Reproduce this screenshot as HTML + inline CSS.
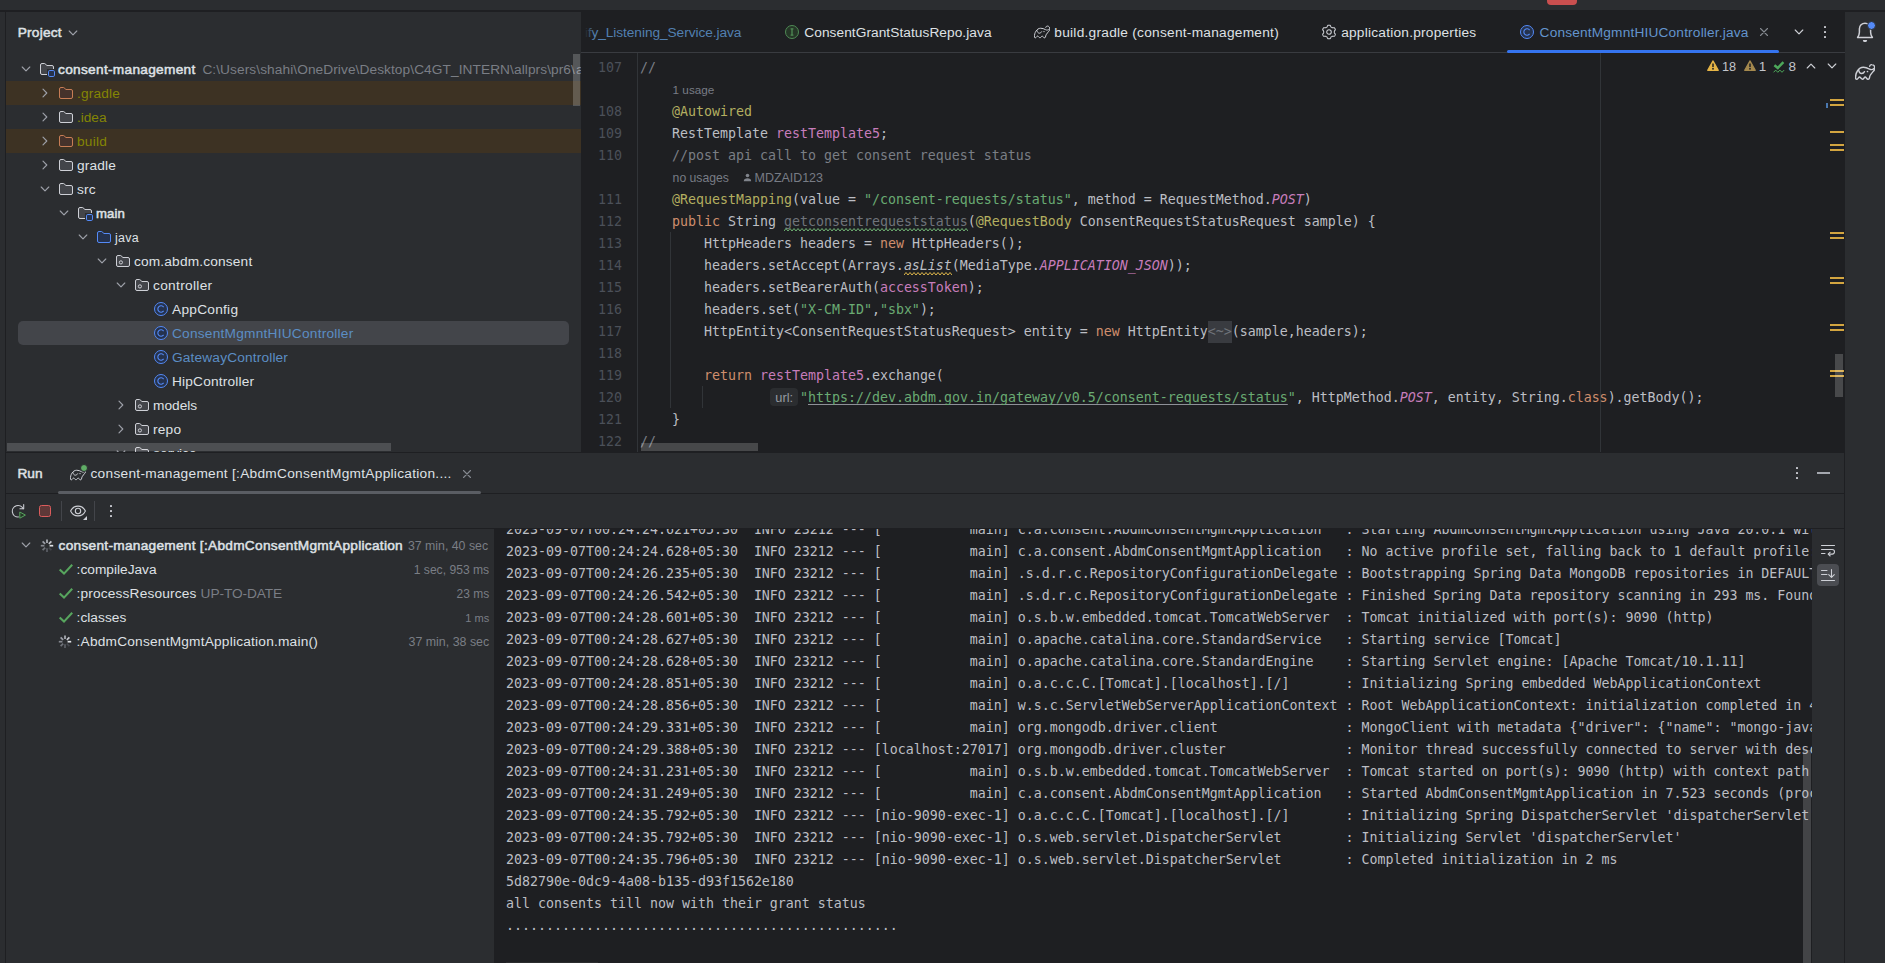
<!DOCTYPE html>
<html lang="en"><head><meta charset="utf-8"><title>consent-management – ConsentMgmntHIUController.java</title>
<style>
html,body{margin:0;padding:0;}
body{width:1885px;height:963px;overflow:hidden;background:#1e1f22;position:relative;font-family:"Liberation Sans", sans-serif;}
.b{position:absolute;display:block;}
.t{position:absolute;white-space:pre;font-family:"Liberation Sans", sans-serif;}
.m{position:absolute;white-space:pre;font-family:"DejaVu Sans Mono", "Liberation Mono", monospace;font-size:13.29px;line-height:22px;height:22px;color:#bcbec4;}
.m i{font-style:italic;}
.k{color:#cf8e6d} .s{color:#6aab73} .a{color:#b3ae60} .f{color:#c77dbb} .c{color:#7a7e85} .g{color:#6f737a}
.u{text-decoration:underline;text-underline-offset:2px;text-decoration-color:#8e9198;text-decoration-thickness:1px;text-decoration-skip-ink:none;}
.fold{background:#393b40;color:#6f737a;display:inline-block;height:22px;}
</style></head>
<body>
<div class="b" style="left:0px;top:0px;width:1885px;height:10px;background:#2b2d30;"></div>
<div class="b" style="left:1547px;top:0px;width:30px;height:5px;background:#c94f4f;border-radius:0 0 4px 4px;"></div>
<div class="b" style="left:0px;top:12px;width:5px;height:951px;background:#2b2d30;"></div>
<div class="b" style="left:6px;top:12px;width:575px;height:440px;background:#2b2d30;"></div>
<div class="b" style="left:1845px;top:12px;width:40px;height:951px;background:#2b2d30;"></div>
<div class="b" style="left:6px;top:453px;width:1839px;height:510px;background:#2b2d30;"></div>
<div class="b" style="left:494px;top:529px;width:1318px;height:434px;background:#1e1f22;"></div>
<span class="t" style="left:17.75px;top:21.0px;line-height:24px;font-size:13.7px;color:#dfe1e5;-webkit-text-stroke:0.5px;letter-spacing:0.2px;">Project</span>
<svg class="b" style="left:65px;top:25px;" width="16" height="16" viewBox="0 0 16 16" fill="none"><path d="M4.2 6L8 9.8L11.8 6" stroke="#9da0a8" stroke-width="1.15" fill="none" stroke-linecap="round" stroke-linejoin="round"/></svg>
<div class="b" style="left:6px;top:81px;width:575px;height:24px;background:#3d3223;"></div>
<div class="b" style="left:6px;top:129px;width:575px;height:24px;background:#3d3223;"></div>
<div class="b" style="left:18px;top:321px;width:551px;height:24px;background:#43454a;border-radius:5px;"></div>
<svg class="b" style="left:18px;top:61px;" width="16" height="16" viewBox="0 0 16 16" fill="none"><path d="M4.2 6L8 9.8L11.8 6" stroke="#9da0a8" stroke-width="1.15" fill="none" stroke-linecap="round" stroke-linejoin="round"/></svg>
<svg class="b" style="left:39px;top:61px;" width="16" height="16" viewBox="0 0 16 16" fill="none"><path d="M1.5 4A1.5 1.5 0 0 1 3 2.5H5.6C5.9 2.5 6.2 2.64 6.4 2.87L7.7 4.5H13A1.5 1.5 0 0 1 14.5 6V8H8V13.5H3A1.5 1.5 0 0 1 1.5 12Z" fill="#43454a"/><path d="M8 13.5H3A1.5 1.5 0 0 1 1.5 12V4A1.5 1.5 0 0 1 3 2.5H5.6C5.9 2.5 6.2 2.64 6.4 2.87L7.7 4.5H13A1.5 1.5 0 0 1 14.5 6V8" stroke="#ced0d6" fill="none"/><rect x="9.5" y="9.5" width="6" height="6" rx="1.3" fill="#25324d" stroke="#548af7"/></svg>
<span class="t" style="left:58px;top:58.0px;line-height:24px;font-size:13.7px;color:#dfe1e5;-webkit-text-stroke:0.5px;letter-spacing:0.29px;">consent-management</span>
<svg class="b" style="left:36.7px;top:85px;" width="16" height="16" viewBox="0 0 16 16" fill="none"><path d="M6 4.2L9.8 8L6 11.8" stroke="#9da0a8" stroke-width="1.15" fill="none" stroke-linecap="round" stroke-linejoin="round"/></svg>
<svg class="b" style="left:58px;top:85px;" width="16" height="16" viewBox="0 0 16 16" fill="none"><path d="M1.5 4A1.5 1.5 0 0 1 3 2.5H5.6C5.9 2.5 6.2 2.64 6.4 2.87L7.7 4.5H13A1.5 1.5 0 0 1 14.5 6V12A1.5 1.5 0 0 1 13 13.5H3A1.5 1.5 0 0 1 1.5 12Z" fill="#45322b" stroke="#c77d55"/></svg>
<span class="t" style="left:77px;top:82.0px;line-height:24px;font-size:13.7px;color:#848504;letter-spacing:0.18px;">.gradle</span>
<svg class="b" style="left:36.7px;top:109px;" width="16" height="16" viewBox="0 0 16 16" fill="none"><path d="M6 4.2L9.8 8L6 11.8" stroke="#9da0a8" stroke-width="1.15" fill="none" stroke-linecap="round" stroke-linejoin="round"/></svg>
<svg class="b" style="left:58px;top:109px;" width="16" height="16" viewBox="0 0 16 16" fill="none"><path d="M1.5 4A1.5 1.5 0 0 1 3 2.5H5.6C5.9 2.5 6.2 2.64 6.4 2.87L7.7 4.5H13A1.5 1.5 0 0 1 14.5 6V12A1.5 1.5 0 0 1 13 13.5H3A1.5 1.5 0 0 1 1.5 12Z" fill="#43454a" stroke="#ced0d6"/></svg>
<span class="t" style="left:77px;top:106.0px;line-height:24px;font-size:13.7px;color:#848504;letter-spacing:-0.04px;">.idea</span>
<svg class="b" style="left:36.7px;top:133px;" width="16" height="16" viewBox="0 0 16 16" fill="none"><path d="M6 4.2L9.8 8L6 11.8" stroke="#9da0a8" stroke-width="1.15" fill="none" stroke-linecap="round" stroke-linejoin="round"/></svg>
<svg class="b" style="left:58px;top:133px;" width="16" height="16" viewBox="0 0 16 16" fill="none"><path d="M1.5 4A1.5 1.5 0 0 1 3 2.5H5.6C5.9 2.5 6.2 2.64 6.4 2.87L7.7 4.5H13A1.5 1.5 0 0 1 14.5 6V12A1.5 1.5 0 0 1 13 13.5H3A1.5 1.5 0 0 1 1.5 12Z" fill="#45322b" stroke="#c77d55"/></svg>
<span class="t" style="left:77px;top:130.0px;line-height:24px;font-size:13.7px;color:#848504;letter-spacing:0.25px;">build</span>
<svg class="b" style="left:36.7px;top:157px;" width="16" height="16" viewBox="0 0 16 16" fill="none"><path d="M6 4.2L9.8 8L6 11.8" stroke="#9da0a8" stroke-width="1.15" fill="none" stroke-linecap="round" stroke-linejoin="round"/></svg>
<svg class="b" style="left:58px;top:157px;" width="16" height="16" viewBox="0 0 16 16" fill="none"><path d="M1.5 4A1.5 1.5 0 0 1 3 2.5H5.6C5.9 2.5 6.2 2.64 6.4 2.87L7.7 4.5H13A1.5 1.5 0 0 1 14.5 6V12A1.5 1.5 0 0 1 13 13.5H3A1.5 1.5 0 0 1 1.5 12Z" fill="#43454a" stroke="#ced0d6"/></svg>
<span class="t" style="left:77px;top:154.0px;line-height:24px;font-size:13.7px;color:#dfe1e5;letter-spacing:0.15px;">gradle</span>
<svg class="b" style="left:37px;top:181px;" width="16" height="16" viewBox="0 0 16 16" fill="none"><path d="M4.2 6L8 9.8L11.8 6" stroke="#9da0a8" stroke-width="1.15" fill="none" stroke-linecap="round" stroke-linejoin="round"/></svg>
<svg class="b" style="left:58px;top:181px;" width="16" height="16" viewBox="0 0 16 16" fill="none"><path d="M1.5 4A1.5 1.5 0 0 1 3 2.5H5.6C5.9 2.5 6.2 2.64 6.4 2.87L7.7 4.5H13A1.5 1.5 0 0 1 14.5 6V12A1.5 1.5 0 0 1 13 13.5H3A1.5 1.5 0 0 1 1.5 12Z" fill="#43454a" stroke="#ced0d6"/></svg>
<span class="t" style="left:77px;top:178.0px;line-height:24px;font-size:13.7px;color:#dfe1e5;letter-spacing:0.2px;">src</span>
<svg class="b" style="left:56px;top:205px;" width="16" height="16" viewBox="0 0 16 16" fill="none"><path d="M4.2 6L8 9.8L11.8 6" stroke="#9da0a8" stroke-width="1.15" fill="none" stroke-linecap="round" stroke-linejoin="round"/></svg>
<svg class="b" style="left:77px;top:205px;" width="16" height="16" viewBox="0 0 16 16" fill="none"><path d="M1.5 4A1.5 1.5 0 0 1 3 2.5H5.6C5.9 2.5 6.2 2.64 6.4 2.87L7.7 4.5H13A1.5 1.5 0 0 1 14.5 6V8H8V13.5H3A1.5 1.5 0 0 1 1.5 12Z" fill="#43454a"/><path d="M8 13.5H3A1.5 1.5 0 0 1 1.5 12V4A1.5 1.5 0 0 1 3 2.5H5.6C5.9 2.5 6.2 2.64 6.4 2.87L7.7 4.5H13A1.5 1.5 0 0 1 14.5 6V8" stroke="#ced0d6" fill="none"/><rect x="9.5" y="9.5" width="6" height="6" rx="1.3" fill="#25324d" stroke="#548af7"/></svg>
<span class="t" style="left:96px;top:202.0px;line-height:24px;font-size:13.16px;color:#dfe1e5;-webkit-text-stroke:0.5px;letter-spacing:0.08px;">main</span>
<svg class="b" style="left:75px;top:229px;" width="16" height="16" viewBox="0 0 16 16" fill="none"><path d="M4.2 6L8 9.8L11.8 6" stroke="#9da0a8" stroke-width="1.15" fill="none" stroke-linecap="round" stroke-linejoin="round"/></svg>
<svg class="b" style="left:96px;top:229px;" width="16" height="16" viewBox="0 0 16 16" fill="none"><path d="M1.5 4A1.5 1.5 0 0 1 3 2.5H5.6C5.9 2.5 6.2 2.64 6.4 2.87L7.7 4.5H13A1.5 1.5 0 0 1 14.5 6V12A1.5 1.5 0 0 1 13 13.5H3A1.5 1.5 0 0 1 1.5 12Z" fill="#25324d" stroke="#548af7"/></svg>
<span class="t" style="left:115px;top:226.0px;line-height:24px;font-size:12.41px;color:#dfe1e5;letter-spacing:0.3px;">java</span>
<svg class="b" style="left:94px;top:253px;" width="16" height="16" viewBox="0 0 16 16" fill="none"><path d="M4.2 6L8 9.8L11.8 6" stroke="#9da0a8" stroke-width="1.15" fill="none" stroke-linecap="round" stroke-linejoin="round"/></svg>
<svg class="b" style="left:115px;top:253px;" width="16" height="16" viewBox="0 0 16 16" fill="none"><path d="M1.5 4A1.5 1.5 0 0 1 3 2.5H5.6C5.9 2.5 6.2 2.64 6.4 2.87L7.7 4.5H13A1.5 1.5 0 0 1 14.5 6V12A1.5 1.5 0 0 1 13 13.5H3A1.5 1.5 0 0 1 1.5 12Z" fill="#43454a" stroke="#ced0d6"/><circle cx="5.9" cy="9.4" r="1.6" stroke="#ced0d6" stroke-width="1" fill="none"/></svg>
<span class="t" style="left:134px;top:250.0px;line-height:24px;font-size:13.7px;color:#dfe1e5;letter-spacing:0.17px;">com.abdm.consent</span>
<svg class="b" style="left:113px;top:277px;" width="16" height="16" viewBox="0 0 16 16" fill="none"><path d="M4.2 6L8 9.8L11.8 6" stroke="#9da0a8" stroke-width="1.15" fill="none" stroke-linecap="round" stroke-linejoin="round"/></svg>
<svg class="b" style="left:134px;top:277px;" width="16" height="16" viewBox="0 0 16 16" fill="none"><path d="M1.5 4A1.5 1.5 0 0 1 3 2.5H5.6C5.9 2.5 6.2 2.64 6.4 2.87L7.7 4.5H13A1.5 1.5 0 0 1 14.5 6V12A1.5 1.5 0 0 1 13 13.5H3A1.5 1.5 0 0 1 1.5 12Z" fill="#43454a" stroke="#ced0d6"/><circle cx="5.9" cy="9.4" r="1.6" stroke="#ced0d6" stroke-width="1" fill="none"/></svg>
<span class="t" style="left:153px;top:274.0px;line-height:24px;font-size:13.7px;color:#dfe1e5;letter-spacing:0.32px;">controller</span>
<svg class="b" style="left:153px;top:301px;" width="16" height="16" viewBox="0 0 16 16" fill="none"><circle cx="8" cy="8" r="6.5" fill="#25324d" stroke="#548af7"/><path d="M10.6 6.1A3.2 3.2 0 1 0 10.6 9.9" stroke="#548af7" stroke-width="1.1" fill="none"/></svg>
<span class="t" style="left:172px;top:298.0px;line-height:24px;font-size:13.7px;color:#dfe1e5;letter-spacing:0.26px;">AppConfig</span>
<svg class="b" style="left:153px;top:325px;" width="16" height="16" viewBox="0 0 16 16" fill="none"><circle cx="8" cy="8" r="6.5" fill="#25324d" stroke="#548af7"/><path d="M10.6 6.1A3.2 3.2 0 1 0 10.6 9.9" stroke="#548af7" stroke-width="1.1" fill="none"/></svg>
<span class="t" style="left:172px;top:322.0px;line-height:24px;font-size:13.7px;color:#5b8dc4;letter-spacing:0.23px;">ConsentMgmntHIUController</span>
<svg class="b" style="left:153px;top:349px;" width="16" height="16" viewBox="0 0 16 16" fill="none"><circle cx="8" cy="8" r="6.5" fill="#25324d" stroke="#548af7"/><path d="M10.6 6.1A3.2 3.2 0 1 0 10.6 9.9" stroke="#548af7" stroke-width="1.1" fill="none"/></svg>
<span class="t" style="left:172px;top:346.0px;line-height:24px;font-size:13.7px;color:#5b8dc4;letter-spacing:0.16px;">GatewayController</span>
<svg class="b" style="left:153px;top:373px;" width="16" height="16" viewBox="0 0 16 16" fill="none"><circle cx="8" cy="8" r="6.5" fill="#25324d" stroke="#548af7"/><path d="M10.6 6.1A3.2 3.2 0 1 0 10.6 9.9" stroke="#548af7" stroke-width="1.1" fill="none"/></svg>
<span class="t" style="left:172px;top:370.0px;line-height:24px;font-size:13.7px;color:#dfe1e5;letter-spacing:0.19px;">HipController</span>
<svg class="b" style="left:112.7px;top:397px;" width="16" height="16" viewBox="0 0 16 16" fill="none"><path d="M6 4.2L9.8 8L6 11.8" stroke="#9da0a8" stroke-width="1.15" fill="none" stroke-linecap="round" stroke-linejoin="round"/></svg>
<svg class="b" style="left:134px;top:397px;" width="16" height="16" viewBox="0 0 16 16" fill="none"><path d="M1.5 4A1.5 1.5 0 0 1 3 2.5H5.6C5.9 2.5 6.2 2.64 6.4 2.87L7.7 4.5H13A1.5 1.5 0 0 1 14.5 6V12A1.5 1.5 0 0 1 13 13.5H3A1.5 1.5 0 0 1 1.5 12Z" fill="#43454a" stroke="#ced0d6"/><circle cx="5.9" cy="9.4" r="1.6" stroke="#ced0d6" stroke-width="1" fill="none"/></svg>
<span class="t" style="left:153px;top:394.0px;line-height:24px;font-size:13.7px;color:#dfe1e5;letter-spacing:0px;">models</span>
<svg class="b" style="left:112.7px;top:421px;" width="16" height="16" viewBox="0 0 16 16" fill="none"><path d="M6 4.2L9.8 8L6 11.8" stroke="#9da0a8" stroke-width="1.15" fill="none" stroke-linecap="round" stroke-linejoin="round"/></svg>
<svg class="b" style="left:134px;top:421px;" width="16" height="16" viewBox="0 0 16 16" fill="none"><path d="M1.5 4A1.5 1.5 0 0 1 3 2.5H5.6C5.9 2.5 6.2 2.64 6.4 2.87L7.7 4.5H13A1.5 1.5 0 0 1 14.5 6V12A1.5 1.5 0 0 1 13 13.5H3A1.5 1.5 0 0 1 1.5 12Z" fill="#43454a" stroke="#ced0d6"/><circle cx="5.9" cy="9.4" r="1.6" stroke="#ced0d6" stroke-width="1" fill="none"/></svg>
<span class="t" style="left:153px;top:418.0px;line-height:24px;font-size:13.7px;color:#dfe1e5;letter-spacing:0.21px;">repo</span>
<div class="b" style="left:200px;top:57px;width:381px;height:24px;overflow:hidden">
<span class="t" style="left:2.4px;top:1.0px;line-height:24px;font-size:13.7px;color:#7a7e85;letter-spacing:0.08px;">C:\Users\shahi\OneDrive\Desktop\C4GT_INTERN\allprs\pr6\</span>
<span class="t" style="left:375.9px;top:1.0px;line-height:24px;font-size:13.7px;color:#7a7e85;">allprs</span>
</div>
<div class="b" style="left:6px;top:441px;width:575px;height:11px;overflow:hidden">
<svg class="b" style="left:107px;top:4px;" width="16" height="16" viewBox="0 0 16 16" fill="none"><path d="M4.2 6L8 9.8L11.8 6" stroke="#9da0a8" stroke-width="1.15" fill="none" stroke-linecap="round" stroke-linejoin="round"/></svg>
<svg class="b" style="left:128px;top:4px;" width="16" height="16" viewBox="0 0 16 16" fill="none"><path d="M1.5 4A1.5 1.5 0 0 1 3 2.5H5.6C5.9 2.5 6.2 2.64 6.4 2.87L7.7 4.5H13A1.5 1.5 0 0 1 14.5 6V12A1.5 1.5 0 0 1 13 13.5H3A1.5 1.5 0 0 1 1.5 12Z" fill="#43454a" stroke="#ced0d6"/><circle cx="5.9" cy="9.4" r="1.6" stroke="#ced0d6" stroke-width="1" fill="none"/></svg>
<span class="t" style="left:147.2px;top:1.0px;line-height:24px;font-size:13.7px;color:#dfe1e5;">service</span>
</div>
<div class="b" style="left:573px;top:54px;width:7px;height:52px;background:rgba(255,255,255,0.2);"></div>
<div class="b" style="left:7px;top:443px;width:384px;height:8px;background:rgba(255,255,255,0.165);"></div>
<div class="b" style="left:581px;top:52px;width:1264px;height:1px;background:#393b40;"></div>
<div class="b" style="left:584px;top:12px;width:200px;height:40px;overflow:hidden">
<span class="t" style="left:0.7px;top:9.0px;line-height:24px;font-size:13.7px;color:#527fb0;letter-spacing:-0.06px;">ify_Listening_Service.java</span>
</div>
<div class="b" style="left:584px;top:14px;width:10px;height:36px;background:linear-gradient(to right,#1e1f22 10%,rgba(30,31,34,0));"></div>
<svg class="b" style="left:784px;top:24px;" width="16" height="16" viewBox="0 0 16 16" fill="none"><circle cx="8" cy="8" r="6.5" fill="#253627" stroke="#4f8a55"/><path d="M6.6 4.8H9.4M8 4.8V11.2M6.6 11.2H9.4" stroke="#4f8a55" stroke-width="1.3" fill="none"/></svg>
<span class="t" style="left:804.3px;top:21.0px;line-height:24px;font-size:13.7px;color:#dfe1e5;letter-spacing:0.06px;">ConsentGrantStatusRepo.java</span>
<svg class="b" style="left:1033.5px;top:24.4px;" width="16" height="16" viewBox="0 0 20 20" fill="none"><path d="M14.7 4.2C15 3 16 2.5 17 2.6C18.6 2.7 19.8 4.2 19.8 6.2C19.8 7.6 19.3 8.2 18.6 9C17.6 10.2 16 12 15.1 13.5C14.6 14.4 14.6 15.4 14.4 16.2C14.2 17 13.6 17.4 12.9 17.3C11.8 17.2 11 15 10.2 15C9.4 15 8.6 17.3 7.5 17.3C6.4 17.3 5.4 15 4.5 15C3.6 15 2.8 17.3 1.7 17.3C1 17.3 0.6 16.9 0.6 16.2C0.4 13.5 1.2 10.8 2.4 9C3.8 6.8 5.8 5.3 8.4 5.3C10.6 5.3 12.4 6 14.5 7.1C16 7.9 17.6 7.8 18.9 6.6" stroke="#ced0d6" stroke-width="1.25" fill="none" stroke-linecap="round" stroke-linejoin="round"/><path d="M3.7 8.3C4 10 5 11.4 6.6 11.5C8 11.6 9 10.6 9.5 9.7" stroke="#ced0d6" stroke-width="1.25" fill="none" stroke-linecap="round"/><circle cx="12.5" cy="9.5" r="0.85" fill="#ced0d6"/></svg>
<span class="t" style="left:1054.3px;top:21.0px;line-height:24px;font-size:13.7px;color:#dfe1e5;letter-spacing:0.26px;">build.gradle (consent-management)</span>
<svg class="b" style="left:1321px;top:24px;" width="16" height="16" viewBox="0 0 16 16" fill="none"><path d="M13.35 8.00 L13.34 8.35 L13.30 8.70 L13.53 9.10 L13.89 9.58 L14.21 10.11 L14.33 10.62 L14.14 11.03 L13.93 11.42 L13.70 11.81 L13.43 12.17 L12.93 12.32 L12.31 12.31 L11.72 12.24 L11.26 12.24 L10.97 12.45 L10.68 12.63 L10.37 12.80 L10.05 12.94 L9.81 13.34 L9.58 13.89 L9.28 14.43 L8.89 14.79 L8.45 14.84 L8.00 14.85 L7.55 14.84 L7.11 14.79 L6.72 14.43 L6.42 13.89 L6.19 13.34 L5.95 12.94 L5.63 12.80 L5.33 12.63 L5.03 12.45 L4.74 12.24 L4.28 12.24 L3.69 12.31 L3.07 12.32 L2.57 12.17 L2.30 11.81 L2.07 11.42 L1.86 11.03 L1.67 10.62 L1.79 10.11 L2.11 9.58 L2.47 9.10 L2.70 8.70 L2.66 8.35 L2.65 8.00 L2.66 7.65 L2.70 7.30 L2.47 6.90 L2.11 6.42 L1.79 5.89 L1.67 5.38 L1.86 4.97 L2.07 4.58 L2.30 4.19 L2.57 3.83 L3.07 3.68 L3.69 3.69 L4.28 3.76 L4.74 3.76 L5.03 3.55 L5.32 3.37 L5.63 3.20 L5.95 3.06 L6.19 2.66 L6.42 2.11 L6.72 1.57 L7.11 1.21 L7.55 1.16 L8.00 1.15 L8.45 1.16 L8.89 1.21 L9.28 1.57 L9.58 2.11 L9.81 2.66 L10.05 3.06 L10.37 3.20 L10.68 3.37 L10.97 3.55 L11.26 3.76 L11.72 3.76 L12.31 3.69 L12.93 3.68 L13.43 3.83 L13.70 4.19 L13.93 4.57 L14.14 4.97 L14.33 5.38 L14.21 5.89 L13.89 6.42 L13.53 6.90 L13.30 7.30 L13.34 7.65Z" stroke="#ced0d6" stroke-width="1.05" stroke-linejoin="round" fill="none"/><circle cx="8" cy="8" r="2.3" stroke="#ced0d6" stroke-width="1.05" fill="none"/></svg>
<span class="t" style="left:1341.2px;top:21.0px;line-height:24px;font-size:13.7px;color:#dfe1e5;letter-spacing:0.23px;">application.properties</span>
<svg class="b" style="left:1519px;top:24px;" width="16" height="16" viewBox="0 0 16 16" fill="none"><circle cx="8" cy="8" r="6.5" fill="#25324d" stroke="#548af7"/><path d="M10.6 6.1A3.2 3.2 0 1 0 10.6 9.9" stroke="#548af7" stroke-width="1.1" fill="none"/></svg>
<span class="t" style="left:1539.6px;top:21.0px;line-height:24px;font-size:13.7px;color:#6394cd;letter-spacing:0.17px;">ConsentMgmntHIUController.java</span>
<svg class="b" style="left:1756px;top:24px;" width="16" height="16" viewBox="0 0 16 16" fill="none"><path d="M4.5 4.5L11.5 11.5M11.5 4.5L4.5 11.5" stroke="#868a91" stroke-width="1.1" stroke-linecap="round"/></svg>
<div class="b" style="left:1507px;top:50px;width:272px;height:3px;background:#3574f0;border-radius:1.5px;"></div>
<svg class="b" style="left:1791px;top:24px;" width="16" height="16" viewBox="0 0 16 16" fill="none"><path d="M4.2 6L8 9.8L11.8 6" stroke="#ced0d6" stroke-width="1.15" fill="none" stroke-linecap="round" stroke-linejoin="round"/></svg>
<svg class="b" style="left:1817px;top:24px;" width="16" height="16" viewBox="0 0 16 16" fill="none"><rect x="7" y="2" width="2" height="2" rx="0.4" fill="#ced0d6"/><rect x="7" y="7" width="2" height="2" rx="0.4" fill="#ced0d6"/><rect x="7" y="12" width="2" height="2" rx="0.4" fill="#ced0d6"/></svg>
<div class="b" style="left:637px;top:53px;width:1px;height:399px;background:#313438;"></div>
<div class="b" style="left:1600px;top:53px;width:1px;height:399px;background:#313438;"></div>
<div class="b" style="left:670px;top:232px;width:1px;height:176px;background:#313438;"></div>
<div class="b" style="left:702px;top:386px;width:1px;height:22px;background:#313438;"></div>
<div class="m" style="left:590px;width:32px;top:57px;text-align:right;color:#4b5059">107</div>
<div class="m" style="left:640px;top:57px"><span class="c">//</span></div>
<div class="m" style="left:590px;width:32px;top:101px;text-align:right;color:#4b5059">108</div>
<div class="m" style="left:640px;top:101px">    <span class="a">@Autowired</span></div>
<div class="m" style="left:590px;width:32px;top:123px;text-align:right;color:#4b5059">109</div>
<div class="m" style="left:640px;top:123px">    RestTemplate <span class="f">restTemplate5</span>;</div>
<div class="m" style="left:590px;width:32px;top:145px;text-align:right;color:#4b5059">110</div>
<div class="m" style="left:640px;top:145px">    <span class="c">//post api call to get consent request status</span></div>
<div class="m" style="left:590px;width:32px;top:189px;text-align:right;color:#4b5059">111</div>
<div class="m" style="left:640px;top:189px">    <span class="a">@RequestMapping</span>(value = <span class="s">"/consent-requests/status"</span>, method = RequestMethod.<i class="f">POST</i>)</div>
<div class="m" style="left:590px;width:32px;top:211px;text-align:right;color:#4b5059">112</div>
<div class="m" style="left:640px;top:211px">    <span class="k">public</span> String <span class="g">getconsentrequeststatus</span>(<span class="a">@RequestBody</span> ConsentRequestStatusRequest sample) {</div>
<div class="m" style="left:590px;width:32px;top:233px;text-align:right;color:#4b5059">113</div>
<div class="m" style="left:640px;top:233px">        HttpHeaders headers = <span class="k">new</span> HttpHeaders();</div>
<div class="m" style="left:590px;width:32px;top:255px;text-align:right;color:#4b5059">114</div>
<div class="m" style="left:640px;top:255px">        headers.setAccept(Arrays.<i>asList</i>(MediaType.<i class="f">APPLICATION_JSON</i>));</div>
<div class="m" style="left:590px;width:32px;top:277px;text-align:right;color:#4b5059">115</div>
<div class="m" style="left:640px;top:277px">        headers.setBearerAuth(<span class="f">accessToken</span>);</div>
<div class="m" style="left:590px;width:32px;top:299px;text-align:right;color:#4b5059">116</div>
<div class="m" style="left:640px;top:299px">        headers.set(<span class="s">"X-CM-ID"</span>,<span class="s">"sbx"</span>);</div>
<div class="m" style="left:590px;width:32px;top:321px;text-align:right;color:#4b5059">117</div>
<div class="m" style="left:640px;top:321px">        HttpEntity&lt;ConsentRequestStatusRequest&gt; entity = <span class="k">new</span> HttpEntity<span class="fold">&lt;~&gt;</span>(sample,headers);</div>
<div class="m" style="left:590px;width:32px;top:343px;text-align:right;color:#4b5059">118</div>
<div class="m" style="left:590px;width:32px;top:365px;text-align:right;color:#4b5059">119</div>
<div class="m" style="left:640px;top:365px">        <span class="k">return</span> <span class="f">restTemplate5</span>.exchange(</div>
<div class="m" style="left:590px;width:32px;top:387px;text-align:right;color:#4b5059">120</div>
<div class="m" style="left:800px;top:387px"><span class="s">"<span class="u">https://dev.abdm.gov.in/gateway/v0.5/consent-requests/status</span>"</span>, HttpMethod.<i class="f">POST</i>, entity, String.<span class="k">class</span>).getBody();</div>
<div class="m" style="left:590px;width:32px;top:409px;text-align:right;color:#4b5059">121</div>
<div class="m" style="left:640px;top:409px">    }</div>
<div class="m" style="left:590px;width:32px;top:431px;text-align:right;color:#4b5059">122</div>
<div class="m" style="left:640px;top:431px"><span class="c">//</span></div>
<div class="b" style="left:770px;top:388px;width:28px;height:18px;background:#2b2d30;border-radius:4px;"></div>
<span class="t" style="left:775.3px;top:389.0px;line-height:18px;font-size:12.8px;color:#959aa2;letter-spacing:0.03px;">url:</span>
<span class="t" style="left:672.6px;top:79.0px;line-height:22px;font-size:11.73px;color:#787c85;letter-spacing:0px;">1 usage</span>
<span class="t" style="left:672.6px;top:167.0px;line-height:22px;font-size:12.23px;color:#787c85;letter-spacing:0px;">no usages</span>
<svg class="b" style="left:741.5px;top:172px;" width="11" height="11" viewBox="0 0 16 16" fill="none"><circle cx="8" cy="5.2" r="2.6" fill="#80848c"/><path d="M2.6 13.4C2.6 10.6 5 9.2 8 9.2C11 9.2 13.4 10.6 13.4 13.4Z" fill="#80848c"/></svg>
<span class="t" style="left:754.6px;top:167.0px;line-height:22px;font-size:12.5px;color:#787c85;letter-spacing:-0.05px;">MDZAID123</span>
<svg class="b" style="left:784px;top:227.8px;" width="184" height="4" viewBox="0 0 184 4" fill="none"><path d="M0 3.0L2 0.5L4 3.0L6 0.5L8 3.0L10 0.5L12 3.0L14 0.5L16 3.0L18 0.5L20 3.0L22 0.5L24 3.0L26 0.5L28 3.0L30 0.5L32 3.0L34 0.5L36 3.0L38 0.5L40 3.0L42 0.5L44 3.0L46 0.5L48 3.0L50 0.5L52 3.0L54 0.5L56 3.0L58 0.5L60 3.0L62 0.5L64 3.0L66 0.5L68 3.0L70 0.5L72 3.0L74 0.5L76 3.0L78 0.5L80 3.0L82 0.5L84 3.0L86 0.5L88 3.0L90 0.5L92 3.0L94 0.5L96 3.0L98 0.5L100 3.0L102 0.5L104 3.0L106 0.5L108 3.0L110 0.5L112 3.0L114 0.5L116 3.0L118 0.5L120 3.0L122 0.5L124 3.0L126 0.5L128 3.0L130 0.5L132 3.0L134 0.5L136 3.0L138 0.5L140 3.0L142 0.5L144 3.0L146 0.5L148 3.0L150 0.5L152 3.0L154 0.5L156 3.0L158 0.5L160 3.0L162 0.5L164 3.0L166 0.5L168 3.0L170 0.5L172 3.0L174 0.5L176 3.0L178 0.5L180 3.0L182 0.5L184 3.0" stroke="#6fb374" stroke-width="1" fill="none"/></svg>
<svg class="b" style="left:904px;top:271.8px;" width="48" height="4" viewBox="0 0 48 4" fill="none"><path d="M0 3.0L2 0.5L4 3.0L6 0.5L8 3.0L10 0.5L12 3.0L14 0.5L16 3.0L18 0.5L20 3.0L22 0.5L24 3.0L26 0.5L28 3.0L30 0.5L32 3.0L34 0.5L36 3.0L38 0.5L40 3.0L42 0.5L44 3.0L46 0.5L48 3.0" stroke="#dcb64c" stroke-width="1" fill="none"/></svg>
<svg class="b" style="left:1705px;top:58px;" width="16" height="16" viewBox="0 0 16 16" fill="none"><path d="M8 2.9L13.3 12.3H2.7Z" fill="#e5b446" stroke="#e5b446" stroke-width="1.2" stroke-linejoin="round"/><path d="M8 5.4V9" stroke="#1e1f22" stroke-width="1.5"/><rect x="7.2" y="9.9" width="1.6" height="1.7" fill="#1e1f22"/></svg>
<span class="t" style="left:1721.96px;top:55.0px;line-height:24px;font-size:12.69px;color:#c3c5cb;letter-spacing:-0px;">18</span>
<svg class="b" style="left:1742px;top:58px;" width="16" height="16" viewBox="0 0 16 16" fill="none"><path d="M8 2.9L13.3 12.3H2.7Z" fill="#a5894e" stroke="#a5894e" stroke-width="1.2" stroke-linejoin="round"/><path d="M8 5.4V9" stroke="#1e1f22" stroke-width="1.5"/><rect x="7.2" y="9.9" width="1.6" height="1.7" fill="#1e1f22"/></svg>
<span class="t" style="left:1758.8px;top:55.0px;line-height:24px;font-size:13.5px;color:#c3c5cb;">1</span>
<svg class="b" style="left:1771px;top:58px;" width="16" height="16" viewBox="0 0 16 16" fill="none"><path d="M3.4 7.3L6.8 10L12.4 4.1" stroke="#4da85a" stroke-width="2.5" fill="none" stroke-linejoin="miter"/><path d="M2.6 14.3L4.7 12.1L6.8 14.3L8.9 12.1L11 14.3L13.1 12.1" stroke="#4da85a" stroke-width="1" fill="none"/></svg>
<span class="t" style="left:1788.6px;top:55.0px;line-height:24px;font-size:13.5px;color:#c3c5cb;">8</span>
<svg class="b" style="left:1803px;top:58px;" width="16" height="16" viewBox="0 0 16 16" fill="none"><path d="M4.2 10L8 6.2L11.8 10" stroke="#ced0d6" stroke-width="1.15" fill="none" stroke-linecap="round" stroke-linejoin="round"/></svg>
<svg class="b" style="left:1824px;top:58px;" width="16" height="16" viewBox="0 0 16 16" fill="none"><path d="M4.2 6L8 9.8L11.8 6" stroke="#ced0d6" stroke-width="1.15" fill="none" stroke-linecap="round" stroke-linejoin="round"/></svg>
<div class="b" style="left:1830px;top:99px;width:14px;height:2px;background:#d3a540;"></div>
<div class="b" style="left:1830px;top:104px;width:14px;height:2px;background:#d3a540;"></div>
<div class="b" style="left:1830px;top:131px;width:14px;height:2px;background:#d3a540;"></div>
<div class="b" style="left:1830px;top:144px;width:14px;height:2px;background:#d3a540;"></div>
<div class="b" style="left:1830px;top:149px;width:14px;height:2px;background:#d3a540;"></div>
<div class="b" style="left:1830px;top:232px;width:14px;height:2px;background:#d3a540;"></div>
<div class="b" style="left:1830px;top:237px;width:14px;height:2px;background:#d3a540;"></div>
<div class="b" style="left:1830px;top:277px;width:14px;height:2px;background:#d3a540;"></div>
<div class="b" style="left:1830px;top:282px;width:14px;height:2px;background:#d3a540;"></div>
<div class="b" style="left:1830px;top:324px;width:14px;height:2px;background:#d3a540;"></div>
<div class="b" style="left:1830px;top:329px;width:14px;height:2px;background:#d3a540;"></div>
<div class="b" style="left:1830px;top:370px;width:14px;height:2px;background:#d3a540;"></div>
<div class="b" style="left:1830px;top:375px;width:14px;height:2px;background:#d3a540;"></div>
<div class="b" style="left:1826px;top:103px;width:2px;height:5px;background:#4a78b0;"></div>
<div class="b" style="left:1835px;top:354px;width:8px;height:43px;background:rgba(255,255,255,0.19);"></div>
<div class="b" style="left:641px;top:443px;width:117px;height:8px;background:rgba(255,255,255,0.185);"></div>
<svg class="b" style="left:1855px;top:22px;" width="20" height="20" viewBox="0 0 20 20" fill="none"><path d="M2.6 15.5H17.4C16.2 13.6 15.6 12.2 15.6 10.2V6.8A5.6 5.6 0 0 0 4.4 6.8V10.2C4.4 12.2 3.8 13.6 2.6 15.5Z" stroke="#ced0d6" stroke-width="1.5" fill="none" stroke-linejoin="round"/><path d="M7.9 18.1A2.1 2.1 0 0 0 12.1 18.1Z" fill="#ced0d6"/></svg>
<div class="b" style="left:1867px;top:21.1px;width:7.2px;height:7.2px;background:#548af7;border-radius:50%;border:1.5px solid #2b2d30;"></div>
<svg class="b" style="left:1855px;top:62px;" width="20" height="20" viewBox="0 0 20 20" fill="none"><path d="M14.7 4.2C15 3 16 2.5 17 2.6C18.6 2.7 19.8 4.2 19.8 6.2C19.8 7.6 19.3 8.2 18.6 9C17.6 10.2 16 12 15.1 13.5C14.6 14.4 14.6 15.4 14.4 16.2C14.2 17 13.6 17.4 12.9 17.3C11.8 17.2 11 15 10.2 15C9.4 15 8.6 17.3 7.5 17.3C6.4 17.3 5.4 15 4.5 15C3.6 15 2.8 17.3 1.7 17.3C1 17.3 0.6 16.9 0.6 16.2C0.4 13.5 1.2 10.8 2.4 9C3.8 6.8 5.8 5.3 8.4 5.3C10.6 5.3 12.4 6 14.5 7.1C16 7.9 17.6 7.8 18.9 6.6" stroke="#ced0d6" stroke-width="1.4" fill="none" stroke-linecap="round" stroke-linejoin="round"/><path d="M3.7 8.3C4 10 5 11.4 6.6 11.5C8 11.6 9 10.6 9.5 9.7" stroke="#ced0d6" stroke-width="1.4" fill="none" stroke-linecap="round"/><circle cx="12.5" cy="9.5" r="0.85" fill="#ced0d6"/></svg>
<div class="b" style="left:6px;top:493px;width:1839px;height:1px;background:#1e1f22;"></div>
<div class="b" style="left:6px;top:528px;width:1839px;height:1px;background:#1e1f22;"></div>
<div class="b" style="left:1844px;top:453px;width:1px;height:510px;background:#1e1f22;"></div>
<div class="b" style="left:506px;top:962px;width:92px;height:1px;background:#2b2c2e;"></div>
<span class="t" style="left:17.45px;top:462.0px;line-height:24px;font-size:13.7px;color:#dfe1e5;-webkit-text-stroke:0.5px;letter-spacing:0.05px;">Run</span>
<svg class="b" style="left:69.5px;top:466px;" width="16" height="16" viewBox="0 0 20 20" fill="none"><path d="M14.7 4.2C15 3 16 2.5 17 2.6C18.6 2.7 19.8 4.2 19.8 6.2C19.8 7.6 19.3 8.2 18.6 9C17.6 10.2 16 12 15.1 13.5C14.6 14.4 14.6 15.4 14.4 16.2C14.2 17 13.6 17.4 12.9 17.3C11.8 17.2 11 15 10.2 15C9.4 15 8.6 17.3 7.5 17.3C6.4 17.3 5.4 15 4.5 15C3.6 15 2.8 17.3 1.7 17.3C1 17.3 0.6 16.9 0.6 16.2C0.4 13.5 1.2 10.8 2.4 9C3.8 6.8 5.8 5.3 8.4 5.3C10.6 5.3 12.4 6 14.5 7.1C16 7.9 17.6 7.8 18.9 6.6" stroke="#ced0d6" stroke-width="1.25" fill="none" stroke-linecap="round" stroke-linejoin="round"/><path d="M3.7 8.3C4 10 5 11.4 6.6 11.5C8 11.6 9 10.6 9.5 9.7" stroke="#ced0d6" stroke-width="1.25" fill="none" stroke-linecap="round"/><circle cx="12.5" cy="9.5" r="0.85" fill="#ced0d6"/></svg>
<div class="b" style="left:80px;top:464px;width:6px;height:6px;background:#5fad65;border-radius:50%;border:1px solid #2b2d30;"></div>
<span class="t" style="left:90.5px;top:462.0px;line-height:24px;font-size:13.7px;color:#dfe1e5;letter-spacing:0.28px;">consent-management [:AbdmConsentMgmtApplication....</span>
<svg class="b" style="left:459px;top:466px;" width="16" height="16" viewBox="0 0 16 16" fill="none"><path d="M4.5 4.5L11.5 11.5M11.5 4.5L4.5 11.5" stroke="#868a91" stroke-width="1.1" stroke-linecap="round"/></svg>
<div class="b" style="left:58px;top:491px;width:423px;height:3px;background:#5a5d63;border-radius:1.5px;"></div>
<svg class="b" style="left:1789px;top:465px;" width="16" height="16" viewBox="0 0 16 16" fill="none"><rect x="7" y="2" width="2" height="2" rx="0.4" fill="#ced0d6"/><rect x="7" y="7" width="2" height="2" rx="0.4" fill="#ced0d6"/><rect x="7" y="12" width="2" height="2" rx="0.4" fill="#ced0d6"/></svg>
<div class="b" style="left:1817px;top:472.4px;width:13px;height:1.3px;background:#a4a7ae;"></div>
<svg class="b" style="left:11px;top:503px;" width="16" height="16" viewBox="0 0 16 16" fill="none"><path d="M12.2 5.8A5.7 5.7 0 1 0 7.4 13.9" stroke="#ced0d6" stroke-width="1.05" fill="none" stroke-linecap="round"/><path d="M8.9 5.7H12.7V1.5" stroke="#ced0d6" stroke-width="1.05" fill="none" stroke-linecap="round" stroke-linejoin="round"/><path d="M8.8 9L14.4 12.1L8.8 15.2Z" stroke="#57a55e" stroke-width="1" fill="#253627" stroke-linejoin="round"/></svg>
<div class="b" style="left:39px;top:505px;width:10px;height:10px;background:#5e3838;border:1px solid #db5c5c;border-radius:2.5px;"></div>
<div class="b" style="left:61px;top:501px;width:1px;height:20px;background:#43454a;"></div>
<svg class="b" style="left:70px;top:503px;" width="16" height="16" viewBox="0 0 16 16" fill="none"><path d="M0.6 8C2.2 4.8 4.8 3.1 8 3.1C11.2 3.1 13.8 4.8 15.4 8C13.8 11.2 11.2 12.9 8 12.9C4.8 12.9 2.2 11.2 0.6 8Z" stroke="#ced0d6" stroke-width="1.1" fill="none" stroke-linejoin="round"/><circle cx="8" cy="8" r="2.7" stroke="#ced0d6" stroke-width="1.1" fill="none"/></svg>
<svg class="b" style="left:83px;top:516px" width="4" height="4" viewBox="0 0 4 4"><path d="M4 0V4H0Z" fill="#ced0d6"/></svg>
<div class="b" style="left:94px;top:501px;width:1px;height:20px;background:#43454a;"></div>
<svg class="b" style="left:103px;top:503px;" width="16" height="16" viewBox="0 0 16 16" fill="none"><rect x="7" y="2" width="2" height="2" rx="0.4" fill="#ced0d6"/><rect x="7" y="7" width="2" height="2" rx="0.4" fill="#ced0d6"/><rect x="7" y="12" width="2" height="2" rx="0.4" fill="#ced0d6"/></svg>
<svg class="b" style="left:18px;top:537px;" width="16" height="16" viewBox="0 0 16 16" fill="none"><path d="M4.2 6L8 9.8L11.8 6" stroke="#9da0a8" stroke-width="1.15" fill="none" stroke-linecap="round" stroke-linejoin="round"/></svg>
<svg class="b" style="left:39px;top:537px;" width="16" height="16" viewBox="0 0 16 16" fill="none"><path d="M8.00 6.10L8.00 2.50" stroke="#b0b3ba" stroke-width="1.7"/><path d="M9.84 6.86L12.38 4.32" stroke="#c4c6cc" stroke-width="1.7"/><path d="M10.60 8.70L14.20 8.70" stroke="#dfe1e5" stroke-width="1.7"/><path d="M9.84 10.54L12.38 13.08" stroke="#44474d" stroke-width="1.7"/><path d="M8.00 11.30L8.00 14.90" stroke="#5c5f66" stroke-width="1.7"/><path d="M6.16 10.54L3.62 13.08" stroke="#70737a" stroke-width="1.7"/><path d="M5.40 8.70L1.80 8.70" stroke="#858890" stroke-width="1.7"/><path d="M6.16 6.86L3.62 4.32" stroke="#9a9da5" stroke-width="1.7"/></svg>
<span class="t" style="left:58.55px;top:534.0px;line-height:24px;font-size:13.7px;color:#dfe1e5;-webkit-text-stroke:0.5px;letter-spacing:0.27px;">consent-management [:AbdmConsentMgmtApplication</span>
<span class="t" style="left:407.9px;top:534.0px;line-height:24px;font-size:12.34px;color:#7a7e85;letter-spacing:0px;">37 min, 40 sec</span>
<svg class="b" style="left:57px;top:561px;" width="16" height="16" viewBox="0 0 16 16" fill="none"><path d="M2.7 8.4L7 12.6L15.2 3.7" stroke="#57a55e" stroke-width="2.1" fill="none" stroke-linejoin="miter"/></svg>
<span class="t" style="left:76.6px;top:558.0px;line-height:24px;font-size:13.7px;color:#dfe1e5;letter-spacing:0.01px;">:compileJava</span>
<span class="t" style="left:413.71px;top:558.0px;line-height:24px;font-size:12.13px;color:#7a7e85;letter-spacing:0px;">1 sec, 953 ms</span>
<svg class="b" style="left:57px;top:585px;" width="16" height="16" viewBox="0 0 16 16" fill="none"><path d="M2.7 8.4L7 12.6L15.2 3.7" stroke="#57a55e" stroke-width="2.1" fill="none" stroke-linejoin="miter"/></svg>
<span class="t" style="left:76.6px;top:582.0px;line-height:24px;font-size:13.7px;color:#dfe1e5;letter-spacing:0.16px;">:processResources</span>
<span class="t" style="left:200.6px;top:582.0px;line-height:24px;font-size:13.7px;color:#7a7e85;letter-spacing:-0.09px;">UP-TO-DATE</span>
<span class="t" style="left:456.6px;top:582.0px;line-height:24px;font-size:11.97px;color:#7a7e85;letter-spacing:0px;">23 ms</span>
<svg class="b" style="left:57px;top:609px;" width="16" height="16" viewBox="0 0 16 16" fill="none"><path d="M2.7 8.4L7 12.6L15.2 3.7" stroke="#57a55e" stroke-width="2.1" fill="none" stroke-linejoin="miter"/></svg>
<span class="t" style="left:76.6px;top:606.0px;line-height:24px;font-size:13.7px;color:#dfe1e5;letter-spacing:0.03px;">:classes</span>
<span class="t" style="left:465.19px;top:606.0px;line-height:24px;font-size:11.08px;color:#7a7e85;letter-spacing:0px;">1 ms</span>
<svg class="b" style="left:57px;top:633px;" width="16" height="16" viewBox="0 0 16 16" fill="none"><path d="M8.00 6.10L8.00 2.50" stroke="#b0b3ba" stroke-width="1.7"/><path d="M9.84 6.86L12.38 4.32" stroke="#c4c6cc" stroke-width="1.7"/><path d="M10.60 8.70L14.20 8.70" stroke="#dfe1e5" stroke-width="1.7"/><path d="M9.84 10.54L12.38 13.08" stroke="#44474d" stroke-width="1.7"/><path d="M8.00 11.30L8.00 14.90" stroke="#5c5f66" stroke-width="1.7"/><path d="M6.16 10.54L3.62 13.08" stroke="#70737a" stroke-width="1.7"/><path d="M5.40 8.70L1.80 8.70" stroke="#858890" stroke-width="1.7"/><path d="M6.16 6.86L3.62 4.32" stroke="#9a9da5" stroke-width="1.7"/></svg>
<span class="t" style="left:76.6px;top:630.0px;line-height:24px;font-size:13.7px;color:#dfe1e5;letter-spacing:0.21px;">:AbdmConsentMgmtApplication.main()</span>
<span class="t" style="left:408.5px;top:630.0px;line-height:24px;font-size:12.41px;color:#7a7e85;letter-spacing:0px;">37 min, 38 sec</span>
<svg class="b" style="left:1820px;top:542px;" width="16" height="16" viewBox="0 0 16 16" fill="none"><path d="M1.5 3.5H14.5M1.5 7.5H12.2A2.3 2.3 0 0 1 12.2 12.1H8.4M1.5 11.5H5" stroke="#ced0d6" stroke-width="1.05" fill="none" stroke-linecap="round"/><path d="M10.2 10.2L8.2 12.1L10.2 14" stroke="#ced0d6" stroke-width="1.05" fill="none" stroke-linecap="round" stroke-linejoin="round"/></svg>
<div class="b" style="left:1817px;top:564px;width:22px;height:22px;background:#4b4d52;border-radius:4px;"></div>
<svg class="b" style="left:1820px;top:567px;" width="16" height="16" viewBox="0 0 16 16" fill="none"><path d="M1.5 3.5H7M1.5 7.5H7M1.5 13.5H14.5" stroke="#ced0d6" stroke-width="1.05" fill="none" stroke-linecap="round"/><path d="M11.5 2.5V10.2M8.7 7.6L11.5 10.4L14.3 7.6" stroke="#ced0d6" stroke-width="1.05" fill="none" stroke-linecap="round" stroke-linejoin="round"/></svg>
<div class="b" style="left:1803px;top:750px;width:8px;height:213px;background:rgba(255,255,255,0.17);"></div>
<div class="b" style="left:494px;top:529px;width:1318px;height:434px;overflow:hidden">
<div class="m" style="left:12px;top:-10px">2023-09-07T00:24:24.621+05:30  INFO 23212 --- [           main] c.a.consent.AbdmConsentMgmtApplication   : Starting AbdmConsentMgmtApplication using Java 20.0.1 with PID 23212</div>
<div class="m" style="left:12px;top:12px">2023-09-07T00:24:24.628+05:30  INFO 23212 --- [           main] c.a.consent.AbdmConsentMgmtApplication   : No active profile set, falling back to 1 default profile: "default"</div>
<div class="m" style="left:12px;top:34px">2023-09-07T00:24:26.235+05:30  INFO 23212 --- [           main] .s.d.r.c.RepositoryConfigurationDelegate : Bootstrapping Spring Data MongoDB repositories in DEFAULT mode.</div>
<div class="m" style="left:12px;top:56px">2023-09-07T00:24:26.542+05:30  INFO 23212 --- [           main] .s.d.r.c.RepositoryConfigurationDelegate : Finished Spring Data repository scanning in 293 ms. Found 4 MongoDB repository interfaces.</div>
<div class="m" style="left:12px;top:78px">2023-09-07T00:24:28.601+05:30  INFO 23212 --- [           main] o.s.b.w.embedded.tomcat.TomcatWebServer  : Tomcat initialized with port(s): 9090 (http)</div>
<div class="m" style="left:12px;top:100px">2023-09-07T00:24:28.627+05:30  INFO 23212 --- [           main] o.apache.catalina.core.StandardService   : Starting service [Tomcat]</div>
<div class="m" style="left:12px;top:122px">2023-09-07T00:24:28.628+05:30  INFO 23212 --- [           main] o.apache.catalina.core.StandardEngine    : Starting Servlet engine: [Apache Tomcat/10.1.11]</div>
<div class="m" style="left:12px;top:144px">2023-09-07T00:24:28.851+05:30  INFO 23212 --- [           main] o.a.c.c.C.[Tomcat].[localhost].[/]       : Initializing Spring embedded WebApplicationContext</div>
<div class="m" style="left:12px;top:166px">2023-09-07T00:24:28.856+05:30  INFO 23212 --- [           main] w.s.c.ServletWebServerApplicationContext : Root WebApplicationContext: initialization completed in 4158 ms</div>
<div class="m" style="left:12px;top:188px">2023-09-07T00:24:29.331+05:30  INFO 23212 --- [           main] org.mongodb.driver.client                : MongoClient with metadata {"driver": {"name": "mongo-java-driver|sync|spring-boot"}}</div>
<div class="m" style="left:12px;top:210px">2023-09-07T00:24:29.388+05:30  INFO 23212 --- [localhost:27017] org.mongodb.driver.cluster               : Monitor thread successfully connected to server with description ServerDescription</div>
<div class="m" style="left:12px;top:232px">2023-09-07T00:24:31.231+05:30  INFO 23212 --- [           main] o.s.b.w.embedded.tomcat.TomcatWebServer  : Tomcat started on port(s): 9090 (http) with context path ''</div>
<div class="m" style="left:12px;top:254px">2023-09-07T00:24:31.249+05:30  INFO 23212 --- [           main] c.a.consent.AbdmConsentMgmtApplication   : Started AbdmConsentMgmtApplication in 7.523 seconds (process running for 8.1)</div>
<div class="m" style="left:12px;top:276px">2023-09-07T00:24:35.792+05:30  INFO 23212 --- [nio-9090-exec-1] o.a.c.c.C.[Tomcat].[localhost].[/]       : Initializing Spring DispatcherServlet 'dispatcherServlet'</div>
<div class="m" style="left:12px;top:298px">2023-09-07T00:24:35.792+05:30  INFO 23212 --- [nio-9090-exec-1] o.s.web.servlet.DispatcherServlet        : Initializing Servlet 'dispatcherServlet'</div>
<div class="m" style="left:12px;top:320px">2023-09-07T00:24:35.796+05:30  INFO 23212 --- [nio-9090-exec-1] o.s.web.servlet.DispatcherServlet        : Completed initialization in 2 ms</div>
<div class="m" style="left:12px;top:342px">5d82790e-0dc9-4a08-b135-d93f1562e180</div>
<div class="m" style="left:12px;top:364px">all consents till now with their grant status</div>
<div class="m" style="left:12px;top:386px">.................................................</div>
</div>
</body></html>
